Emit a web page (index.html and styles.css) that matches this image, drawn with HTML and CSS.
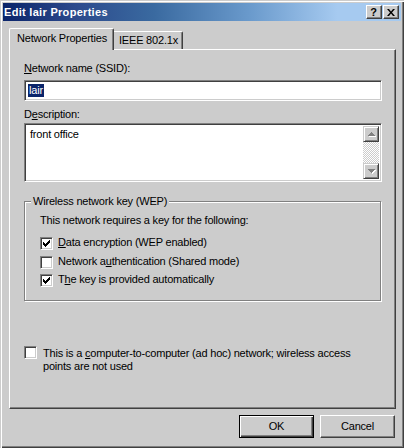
FILE: index.html
```html
<!DOCTYPE html>
<html>
  <head>
    <title>Edit lair Properties</title>
    <link rel="stylesheet" href="styles.css">
  </head>
  <body>
    <div class="window">
      <div class="titlebar">
        <span class="title">Edit lair Properties</span>
        <div class="caption-buttons">
          <span class="cap-btn help">?</span>
          <span class="cap-btn close">
            <svg width="8" height="7" viewBox="0 0 8 7"><path d="M0 0h2l2 2.4L6 0h2L5 3.5 8 7H6L4 4.6 2 7H0l3-3.5z" fill="#000"/></svg>
          </span>
        </div>
      </div>

      <div class="dialog">
        <div class="tabs">
          <div class="tab active">Network Properties</div>
          <div class="tab">IEEE 802.1x</div>
        </div>

        <div class="panel">
          <div class="field-label name-label"><u>N</u>etwork name (SSID):</div>
          <div class="edit"><span class="selection">lair</span></div>

          <div class="field-label desc-label">D<u>e</u>scription:</div>
          <div class="edit memo">
            <div class="memo-text">front office</div>
            <div class="vscroll">
              <div class="scroll-btn">
                <svg width="8" height="5" viewBox="0 0 8 5">
                  <path d="M4 1h1v1h1v1h1v1h1v1H1V4h1V3h1V2h1z" fill="#fff"/>
                  <path d="M3 0h1v1h1v1h1v1h1v1H0V3h1V2h1V1h1z" fill="#808080"/>
                </svg>
              </div>
              <div class="scroll-track"></div>
              <div class="scroll-btn">
                <svg width="8" height="5" viewBox="0 0 8 5">
                  <path d="M1 1h7v1H7v1H6v1H5v1H4V4H3V3H2V2H1z" fill="#fff"/>
                  <path d="M0 0h7v1H6v1H5v1H4v1H3V3H2V2H1V1H0z" fill="#808080"/>
                </svg>
              </div>
            </div>
          </div>

          <div class="group">
            <div class="group-title">Wireless network key (WEP)</div>
            <div class="group-note">This network requires a key for the following:</div>
            <div class="checks">
              <div class="check">
                <span class="box">
                  <svg width="7" height="7" viewBox="0 0 7 7"><path d="M6 0h1v1H6zM5 1h2v1H5zM0 2h1v1H0zM4 2h3v1H4zM0 3h2v1H0zM3 3h3v1H3zM0 4h5v1H0zM1 5h3v1H1zM2 6h1v1H2z" fill="#000"/></svg>
                </span>
                <span class="check-text"><u>D</u>ata encryption (WEP enabled)</span>
              </div>
              <div class="check">
                <span class="box"></span>
                <span class="check-text">Network a<u>u</u>thentication (Shared mode)</span>
              </div>
              <div class="check">
                <span class="box">
                  <svg width="7" height="7" viewBox="0 0 7 7"><path d="M6 0h1v1H6zM5 1h2v1H5zM0 2h1v1H0zM4 2h3v1H4zM0 3h2v1H0zM3 3h3v1H3zM0 4h5v1H0zM1 5h3v1H1zM2 6h1v1H2z" fill="#000"/></svg>
                </span>
                <span class="check-text">T<u>h</u>e key is provided automatically</span>
              </div>
            </div>
          </div>

          <div class="check adhoc">
            <span class="box"></span>
            <span class="check-text">This is a <u>c</u>omputer-to-computer (ad hoc) network; wireless access<br>points are not used</span>
          </div>
        </div>

        <div class="actions">
          <button class="btn default" type="button">OK</button>
          <button class="btn" type="button">Cancel</button>
        </div>
      </div>
    </div>
  </body>
</html>
```

FILE: styles.css
```css
body {
  margin: 0;
  background-color: #cccccc;
  font-family: "Liberation Sans", Arial, sans-serif;
  font-size: 11px;
  line-height: 13px;
  letter-spacing: -0.2px;
  color: #000000;
}

/* window frame */

.window {
  width: 404px;
  height: 448px;
  box-sizing: border-box;
  padding: 3px 3px 3px 3px;
  background-color: #cccccc;
  box-shadow: inset 1px 1px 0 #cccccc, inset 2px 2px 0 #ffffff,
    inset -1px -1px 0 #404040, inset -2px -2px 0 #808080;
}

.titlebar {
  height: 18px;
  display: flex;
  align-items: center;
  justify-content: space-between;
  padding: 0 2px 0 1px;
  background: linear-gradient(to right, #0a246a 0%, #2c4a8c 18%, #3a6aa0 38%, #6a9acc 62%, #a6caf0 84%, #a6caf0 100%);
}

.title {
  color: #ffffff;
  font-weight: bold;
  letter-spacing: 0.3px;
}

.caption-buttons {
  display: flex;
  gap: 1px;
}

.cap-btn {
  width: 16px;
  height: 14px;
  box-sizing: border-box;
  display: flex;
  align-items: center;
  justify-content: center;
  background-color: #cccccc;
  border: 1px solid;
  border-color: #ffffff #404040 #404040 #ffffff;
  box-shadow: inset -1px -1px 0 #808080;
  font-weight: bold;
  font-size: 11px;
  line-height: 12px;
  letter-spacing: 0;
}

.help {
  padding-right: 1px;
}

.close svg {
  display: block;
  margin-right: 1px;
}

/* dialog body */

.dialog {
  padding: 7px 5px 0 6px;
}

.tabs {
  height: 21px;
  display: flex;
  align-items: flex-end;
}

.tab {
  box-sizing: border-box;
  background-color: #cccccc;
  border-top: 1px solid #ffffff;
  border-right: 1px solid #404040;
  box-shadow: inset -1px 0 0 #808080;
  border-top-right-radius: 2px;
}

.tab.active {
  position: relative;
  z-index: 1;
  width: 105px;
  height: 22px;
  margin-bottom: -1px;
  padding: 3px 0 0 7px;
  border-left: 1px solid #ffffff;
  border-top-left-radius: 2px;
}

.tab:not(.active) {
  width: 69px;
  height: 18px;
  padding: 2px 0 0 5px;
}

.panel {
  height: 360px;
  box-sizing: border-box;
  padding: 12px 13px 0 14px;
  border-top: 1px solid #ffffff;
  border-left: 1px solid #ffffff;
  border-right: 1px solid #404040;
  border-bottom: 1px solid #404040;
  box-shadow: inset -1px -1px 0 #808080;
}

.name-label {
  margin-bottom: 5px;
}

.desc-label {
  margin-top: 7px;
  margin-bottom: 2px;
}

/* sunken edit boxes */

.edit {
  width: 358px;
  height: 21px;
  box-sizing: border-box;
  padding: 2px 0 0 2px;
  background-color: #ffffff;
  border: 1px solid;
  border-color: #808080 #ffffff #ffffff #808080;
  box-shadow: inset 1px 1px 0 #404040, inset -1px -1px 0 #cccccc;
}

.edit .selection {
  display: inline-block;
  margin: 1px 0 0 1px;
  padding: 0 1px;
  background-color: #0a246a;
  color: #ffffff;
}

.memo {
  height: 59px;
  padding: 2px;
  display: flex;
}

.memo-text {
  flex: 1;
  padding: 2px 0 0 3px;
}

.vscroll {
  width: 16px;
  display: flex;
  flex-direction: column;
}

.scroll-btn {
  height: 16px;
  box-sizing: border-box;
  display: flex;
  align-items: center;
  justify-content: center;
  background-color: #cccccc;
  border: 1px solid;
  border-color: #cccccc #404040 #404040 #cccccc;
  box-shadow: inset 1px 1px 0 #ffffff, inset -1px -1px 0 #808080;
}

.scroll-btn svg {
  display: block;
  margin: 0 0 0 1px;
}

.scroll-track {
  flex: 1;
  background: repeating-conic-gradient(#ffffff 0 25%, #cccccc 0 50%) 0 0 / 2px 2px;
}

/* group box */

.group {
  width: 357px;
  margin-top: 19px;
  box-sizing: border-box;
  padding: 0 0 13px 15px;
  border: 1px solid #808080;
  box-shadow: 1px 1px 0 #ffffff, inset 1px 1px 0 #ffffff;
}

.group-title {
  width: fit-content;
  margin: -7px 0 0 -9px;
  padding: 0 2px;
  background-color: #cccccc;
}

.group-note {
  margin-top: 6px;
}

.checks {
  margin-top: 10px;
  display: flex;
  flex-direction: column;
  gap: 5.5px;
}

.check {
  display: flex;
  align-items: flex-start;
}

.box {
  width: 13px;
  height: 13px;
  flex-shrink: 0;
  box-sizing: border-box;
  padding: 2px;
  background-color: #ffffff;
  border: 1px solid;
  border-color: #808080 #ffffff #ffffff #808080;
  box-shadow: inset 1px 1px 0 #404040, inset -1px -1px 0 #cccccc;
}

.box svg {
  display: block;
}

.check-text {
  margin: -1px 0 0 5px;
}

.adhoc {
  margin-top: 45px;
}

.adhoc .check-text {
  margin: 1px 0 0 6px;
}

/* buttons */

.actions {
  display: flex;
  justify-content: flex-end;
  gap: 6px;
  margin-top: 6px;
  padding-right: 1px;
}

.btn {
  width: 75px;
  height: 23px;
  padding: 0 0 1px 0;
  font-family: "Liberation Sans", Arial, sans-serif;
  font-size: 11px;
  line-height: 13px;
  letter-spacing: -0.2px;
  color: #000000;
  background-color: #cccccc;
  border: 1px solid;
  border-color: #ffffff #404040 #404040 #ffffff;
  box-shadow: inset -1px -1px 0 #808080;
  border-radius: 0;
}

.btn.default {
  border-color: #000000;
  box-shadow: inset 1px 1px 0 #ffffff, inset -1px -1px 0 #404040, inset -2px -2px 0 #808080;
}
```
